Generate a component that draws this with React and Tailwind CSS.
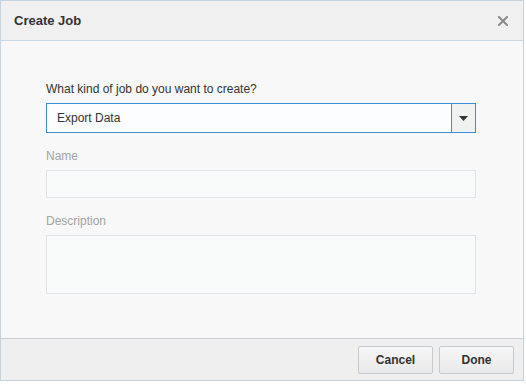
import React from 'react';

export default function App() {
  return (
    <div className="w-[526px] h-[392px] bg-white" style={{ fontFamily: '"Liberation Sans", Arial, sans-serif' }}>
      <div className="w-[524px] h-[381px] border border-[#c5d3de] flex flex-col bg-[#f8f8f8]">
        <div className="h-[40px] shrink-0 flex items-center justify-between pl-[13px] pr-[15px] bg-[#f0f0f0] border-b border-[#c9d7e2]">
          <span className="text-[13px] font-bold text-[#333]">Create Job</span>
          <svg width="10" height="10" viewBox="0 0 10 10" className="mt-[1px]">
            <path d="M1 1 L9 9 M9 1 L1 9" stroke="#8a8a8a" strokeWidth="2" strokeLinecap="square" />
          </svg>
        </div>

        <div className="flex-1 pl-[45px] pr-[47px] pt-[40px]">
          <div className="text-[12px] leading-[16px] text-[#333]">What kind of job do you want to create?</div>
          <div className="mt-[6px] h-[30px] flex border border-[#3a8fd9] bg-[#fcfdff]">
            <div className="flex-1 flex items-center pl-[10px] text-[12px] text-[#333]">Export Data</div>
            <div className="w-[24px] flex items-center justify-center border-l border-[#3a8fd9] bg-[#f0f1f1]">
              <svg width="9" height="5" viewBox="0 0 9 5">
                <path d="M0 0 L9 0 L4.5 5 Z" fill="#333" />
              </svg>
            </div>
          </div>

          <div className="mt-[15px] text-[12px] leading-[16px] text-[#a3a3a3]">Name</div>
          <div className="mt-[6px] h-[28px] border border-[#dfe4e8] bg-[#f9fafa]" />

          <div className="mt-[15px] text-[12px] leading-[16px] text-[#a3a3a3]">Description</div>
          <div className="mt-[6px] h-[59px] border border-[#dfe4e8] bg-[#f9fafa]" />
        </div>

        <div className="h-[42px] shrink-0 flex items-center justify-end gap-[6px] pr-[9px] bg-[#efefef] border-t border-[#c9cdd1]">
          <button className="w-[75px] h-[28px] rounded-[2px] border border-[#c5cacf] bg-gradient-to-b from-[#f6f6f6] to-[#e9e9e9] text-[12px] font-bold text-[#333]">
            Cancel
          </button>
          <button className="w-[75px] h-[28px] rounded-[2px] border border-[#c5cacf] bg-gradient-to-b from-[#f6f6f6] to-[#e9e9e9] text-[12px] font-bold text-[#333]">
            Done
          </button>
        </div>
      </div>
    </div>
  );
}
